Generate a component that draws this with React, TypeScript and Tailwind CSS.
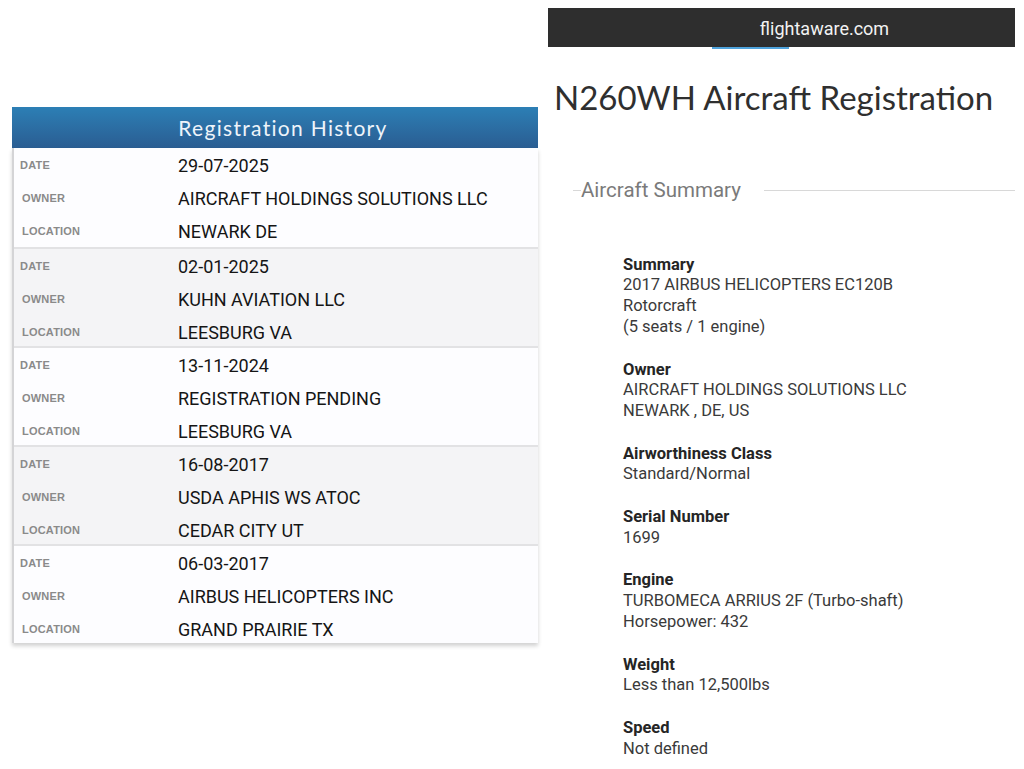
import React from "react";

const history = [
  { date: "29-07-2025", owner: "AIRCRAFT HOLDINGS SOLUTIONS LLC", location: "NEWARK DE" },
  { date: "02-01-2025", owner: "KUHN AVIATION LLC", location: "LEESBURG VA" },
  { date: "13-11-2024", owner: "REGISTRATION PENDING", location: "LEESBURG VA" },
  { date: "16-08-2017", owner: "USDA APHIS WS ATOC", location: "CEDAR CITY UT" },
  { date: "06-03-2017", owner: "AIRBUS HELICOPTERS INC", location: "GRAND PRAIRIE TX" },
];

const details: { label: string; lines: string[] }[] = [
  { label: "Summary", lines: ["2017 AIRBUS HELICOPTERS EC120B", "Rotorcraft", "(5 seats / 1 engine)"] },
  { label: "Owner", lines: ["AIRCRAFT HOLDINGS SOLUTIONS LLC", "NEWARK , DE, US"] },
  { label: "Airworthiness Class", lines: ["Standard/Normal"] },
  { label: "Serial Number", lines: ["1699"] },
  { label: "Engine", lines: ["TURBOMECA ARRIUS 2F (Turbo-shaft)", "Horsepower: 432"] },
  { label: "Weight", lines: ["Less than 12,500lbs"] },
  { label: "Speed", lines: ["Not defined"] },
];

function Row({ label, value, first }: { label: string; value: string; first?: boolean }) {
  return (
    <div className="flex h-[33px] items-center">
      <div
        className={`w-[164px] text-[11px] font-bold tracking-[0.2px] text-[#8a8a8a] ${first ? "pl-[6px]" : "pl-[8px]"}`}
        style={{ fontFamily: "'Liberation Sans', Arial, sans-serif" }}
      >
        {label}
      </div>
      <div className="text-[18px] text-[#151515]" style={{ fontFamily: "Roboto, sans-serif" }}>
        {value}
      </div>
    </div>
  );
}

export default function App() {
  return (
    <div className="flex h-[769px] w-[1024px] overflow-hidden bg-white">
      {/* Left panel */}
      <div className="ml-[12px] mt-[107px] w-[526px] shrink-0">
        <div
          className="flex h-[41px] items-center justify-center bg-gradient-to-b from-[#2c7fb5] to-[#2a5d92] pl-[16px] text-[21px] tracking-[1.3px] text-[#eef4fa]"
          style={{ fontFamily: "Lato, sans-serif" }}
        >
          Registration History
        </div>
        <div className="border-l-[2px] border-[#d4d4d6] shadow-[0_3px_4px_rgba(0,0,0,0.18)]">
          {history.map((h, i) => (
            <div
              key={i}
              className={`h-[99px] pt-[1px] ${i > 0 ? "border-t-[2px] border-[#e2e2e4]" : ""} ${i % 2 === 1 ? "bg-[#f4f4f6]" : "bg-[#fdfdff]"}`}
            >
              <Row label="DATE" value={h.date} first />
              <Row label="OWNER" value={h.owner} />
              <Row label="LOCATION" value={h.location} />
            </div>
          ))}
        </div>
      </div>

      {/* Right panel */}
      <div className="ml-[10px] mt-[8px] flex w-[467px] shrink-0 flex-col">
        <div className="relative flex h-[39px] items-center justify-center bg-[#2e2e2e]">
          <span
            className="ml-[86px] mt-[2px] text-[18px] text-[#f2f2f2]"
            style={{ fontFamily: "Roboto, sans-serif" }}
          >
            flightaware.com
          </span>
          <div className="absolute left-[164px] top-[39px] h-[2px] w-[77px] bg-[#4fa3dc]" />
        </div>
        <h1
          className="mt-[30px] ml-[6px] text-[33px] leading-[40px] text-[#2f2f2f]"
          style={{ fontFamily: "Lato, sans-serif" }}
        >
          N260WH Aircraft Registration
        </h1>
        <div className="mt-[58px] flex items-center">
          <div className="ml-[25px] h-[1px] w-[8px] bg-[#d8d8d8]" />
          <div className="text-[20.5px] text-[#7a7a7a]" style={{ fontFamily: "Roboto, sans-serif" }}>
            Aircraft Summary
          </div>
          <div className="ml-[23px] h-[1px] flex-1 bg-[#d8d8d8]" />
        </div>
        <div
          className="ml-[75px] mt-[49px] flex flex-col gap-[22px] text-[16.5px] leading-[20.7px]"
          style={{ fontFamily: "Roboto, sans-serif" }}
        >
          {details.map((d) => (
            <div key={d.label}>
              <div className="font-bold text-[#252525]">{d.label}</div>
              {d.lines.map((l) => (
                <div key={l} className="text-[#3a3a3a]">
                  {l}
                </div>
              ))}
            </div>
          ))}
        </div>
      </div>
    </div>
  );
}
